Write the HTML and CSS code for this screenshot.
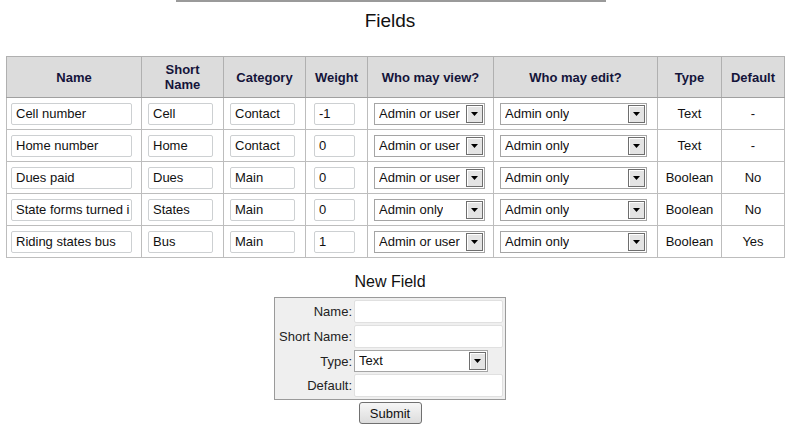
FILE: index.html
```html
<!DOCTYPE html>
<html>
<head>
<meta charset="utf-8">
<link rel="stylesheet" href="styles.css">
</head>
<body>
<div class="topline"></div>
<h1 class="title">Fields</h1>
<table class="fields">
  <colgroup>
    <col class="c1"><col class="c2"><col class="c3"><col class="c4"><col class="c5"><col class="c6"><col class="c7"><col class="c8">
  </colgroup>
  <thead>
    <tr><th>Name</th><th>Short<br>Name</th><th>Category</th><th>Weight</th><th>Who may view?</th><th>Who may edit?</th><th>Type</th><th>Default</th></tr>
  </thead>
  <tbody>
    <tr>
      <td class="pn"><input class="in w-name" value="Cell number"></td>
      <td><input class="in w-short" value="Cell"></td>
      <td><input class="in w-short" value="Contact"></td>
      <td class="pw"><input class="in w-weight" value="-1"></td>
      <td><div class="sel w-view"><span class="st">Admin or user</span><span class="btn"><svg width="7" height="4" viewBox="0 0 7 4"><path d="M0 0h7L3.5 4z" fill="#000"/></svg></span></div></td>
      <td><div class="sel w-edit"><span class="st">Admin only</span><span class="btn"><svg width="7" height="4" viewBox="0 0 7 4"><path d="M0 0h7L3.5 4z" fill="#000"/></svg></span></div></td>
      <td class="ctr">Text</td>
      <td class="ctr">-</td>
    </tr>
    <tr>
      <td class="pn"><input class="in w-name" value="Home number"></td>
      <td><input class="in w-short" value="Home"></td>
      <td><input class="in w-short" value="Contact"></td>
      <td class="pw"><input class="in w-weight" value="0"></td>
      <td><div class="sel w-view"><span class="st">Admin or user</span><span class="btn"><svg width="7" height="4" viewBox="0 0 7 4"><path d="M0 0h7L3.5 4z" fill="#000"/></svg></span></div></td>
      <td><div class="sel w-edit"><span class="st">Admin only</span><span class="btn"><svg width="7" height="4" viewBox="0 0 7 4"><path d="M0 0h7L3.5 4z" fill="#000"/></svg></span></div></td>
      <td class="ctr">Text</td>
      <td class="ctr">-</td>
    </tr>
    <tr>
      <td class="pn"><input class="in w-name" value="Dues paid"></td>
      <td><input class="in w-short" value="Dues"></td>
      <td><input class="in w-short" value="Main"></td>
      <td class="pw"><input class="in w-weight" value="0"></td>
      <td><div class="sel w-view"><span class="st">Admin or user</span><span class="btn"><svg width="7" height="4" viewBox="0 0 7 4"><path d="M0 0h7L3.5 4z" fill="#000"/></svg></span></div></td>
      <td><div class="sel w-edit"><span class="st">Admin only</span><span class="btn"><svg width="7" height="4" viewBox="0 0 7 4"><path d="M0 0h7L3.5 4z" fill="#000"/></svg></span></div></td>
      <td class="ctr">Boolean</td>
      <td class="ctr">No</td>
    </tr>
    <tr>
      <td class="pn"><input class="in w-name" value="State forms turned in"></td>
      <td><input class="in w-short" value="States"></td>
      <td><input class="in w-short" value="Main"></td>
      <td class="pw"><input class="in w-weight" value="0"></td>
      <td><div class="sel w-view"><span class="st">Admin only</span><span class="btn"><svg width="7" height="4" viewBox="0 0 7 4"><path d="M0 0h7L3.5 4z" fill="#000"/></svg></span></div></td>
      <td><div class="sel w-edit"><span class="st">Admin only</span><span class="btn"><svg width="7" height="4" viewBox="0 0 7 4"><path d="M0 0h7L3.5 4z" fill="#000"/></svg></span></div></td>
      <td class="ctr">Boolean</td>
      <td class="ctr">No</td>
    </tr>
    <tr>
      <td class="pn"><input class="in w-name" value="Riding states bus"></td>
      <td><input class="in w-short" value="Bus"></td>
      <td><input class="in w-short" value="Main"></td>
      <td class="pw"><input class="in w-weight" value="1"></td>
      <td><div class="sel w-view"><span class="st">Admin or user</span><span class="btn"><svg width="7" height="4" viewBox="0 0 7 4"><path d="M0 0h7L3.5 4z" fill="#000"/></svg></span></div></td>
      <td><div class="sel w-edit"><span class="st">Admin only</span><span class="btn"><svg width="7" height="4" viewBox="0 0 7 4"><path d="M0 0h7L3.5 4z" fill="#000"/></svg></span></div></td>
      <td class="ctr">Boolean</td>
      <td class="ctr">Yes</td>
    </tr>
  </tbody>
</table>

<h2 class="subtitle">New Field</h2>
<div class="formwrap">
  <table class="newform">
    <tr><td class="lbl">Name:</td><td><input class="in w-form"></td></tr>
    <tr><td class="lbl">Short Name:</td><td><input class="in w-form"></td></tr>
    <tr><td class="lbl">Type:</td><td><div class="sel w-type"><span class="st">Text</span><span class="btn"><svg width="7" height="4" viewBox="0 0 7 4"><path d="M0 0h7L3.5 4z" fill="#000"/></svg></span></div></td></tr>
    <tr><td class="lbl">Default:</td><td><input class="in w-form"></td></tr>
  </table>
  <button class="submit">Submit</button>
</div>
</body>
</html>
```

FILE: styles.css
```css
html, body {
  margin: 0;
  padding: 0;
  background: #fff;
}
body {
  font-family: "Liberation Sans", Arial, sans-serif;
  font-size: 13px;
  color: #111;
}
.topline {
  width: 430px;
  height: 2px;
  margin-left: 176px;
  background: #9a9a9a;
}
.title {
  margin: 8px 0 0 0;
  padding-right: 12px;
  height: 22px;
  line-height: 22px;
  text-align: center;
  font-size: 19px;
  font-weight: normal;
  color: #111;
}
.fields {
  margin: 24px 0 0 6px;
  border-collapse: collapse;
  table-layout: fixed;
  width: 778px;
}
.c1 { width: 135px; }
.c2 { width: 82px; }
.c3 { width: 82px; }
.c4 { width: 62px; }
.c5 { width: 126px; }
.c6 { width: 164px; }
.c7 { width: 64px; }
.c8 { width: 63px; }
.fields th, .fields td {
  border: 1px solid #bdbdbd;
  vertical-align: middle;
}
.fields th {
  padding: 0 2px;
  background: #dcdcdc;
  height: 40px;
  font-weight: bold;
  font-size: 13px;
  line-height: 15px;
  color: #14143a;
  border-color: #b0b0b0;
  border-bottom: 1px solid #a0a0a0;
}
.fields td {
  height: 31px;
  padding: 0 0 0 6px;
  text-align: left;
}
.fields td.pn { padding-left: 4px; }
.fields td.pw { padding-left: 8px; }
.fields td.ctr { text-align: center; padding: 0; }
.in {
  box-sizing: border-box;
  height: 22px;
  border: 1px solid #cdd0d2;
  border-radius: 2px;
  font-family: "Liberation Sans", Arial, sans-serif;
  font-size: 13px;
  color: #111;
  padding: 0 1px 0 4px;
  background: #fff;
  vertical-align: middle;
  margin: 0;
}
.w-name { width: 121px; }
.w-short { width: 65px; }
.w-weight { width: 41px; }
.sel {
  box-sizing: border-box;
  display: inline-flex;
  align-items: center;
  justify-content: space-between;
  height: 22px;
  border: 1px solid #a5a5a5;
  background: #fff;
  text-align: left;
  vertical-align: middle;
  padding: 0 1px 0 4px;
}
.st {
  white-space: nowrap;
  overflow: hidden;
  line-height: 18px;
}
.btn {
  box-sizing: border-box;
  flex: none;
  width: 17px;
  height: 18px;
  border: 1px solid #6e6e6e;
  background: #e4e4e4;
  display: flex;
  align-items: center;
  justify-content: center;
  box-shadow: inset 1px 1px 0 #fff;
}
.w-view { width: 111px; }
.w-edit { width: 147px; }
.subtitle {
  margin: 14px 0 0 0;
  padding-right: 12px;
  height: 20px;
  line-height: 20px;
  text-align: center;
  font-size: 16px;
  font-weight: normal;
  color: #111;
}
.formwrap {
  display: flex;
  flex-direction: column;
  align-items: center;
  padding-right: 12px;
}
.newform {
  margin-top: 5px;
  border: 1px solid #9a9a9a;
  background: #efefef;
  border-collapse: separate;
  border-spacing: 2px;
  width: 232px;
}
.newform td {
  padding: 0;
  height: 22px;
}
.newform .in { height: 23px; }
.lbl {
  text-align: right;
  width: 76px;
  color: #222;
}
.w-form { width: 149px; border-color: #e0e0e0; }
.w-type { width: 134px; }
.submit {
  margin-top: 2px;
  box-sizing: border-box;
  width: 63px;
  height: 22px;
  font-family: "Liberation Sans", Arial, sans-serif;
  font-size: 13px;
  color: #111;
  border: 1px solid #707070;
  border-radius: 3px;
  background: linear-gradient(#f6f6f6, #dcdcdc);
  padding: 0;
}
```
